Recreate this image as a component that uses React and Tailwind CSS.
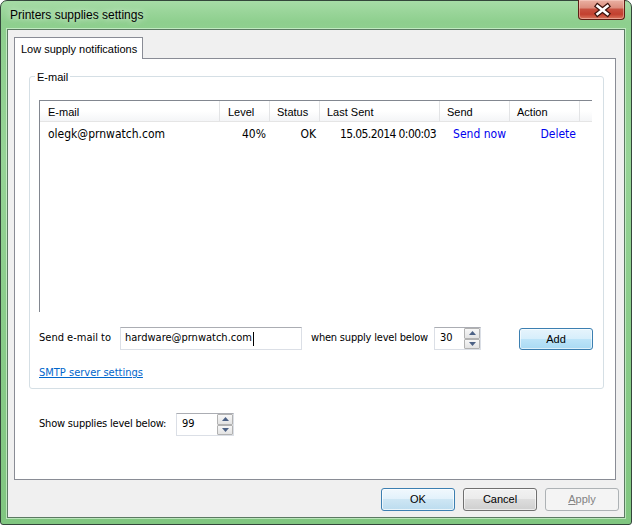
import React from 'react';

const tahoma = "font-['DejaVu_Sans_Condensed','Liberation_Sans',sans-serif]";

const columns = [
    { title: 'E-mail', width: 'w-[180px]', pad: 'pl-[8px]' },
    { title: 'Level', width: 'w-[50px]', pad: 'pl-[8px]' },
    { title: 'Status', width: 'w-[50px]', pad: 'pl-[7px]' },
    { title: 'Last Sent', width: 'w-[120px]', pad: 'pl-[7px]' },
    { title: 'Send', width: 'w-[70px]', pad: 'pl-[7px]' },
    { title: 'Action', width: 'w-[70px]', pad: 'pl-[7px]' },
];

const rows = [
    { email: 'olegk@prnwatch.com', level: '40%', status: 'OK', lastSent: '15.05.2014 0:00:03' },
];

function CloseButton() {
    return (
        <div className="-mt-px h-[20px] w-[47px] overflow-hidden rounded-b-[4px] border border-t-0 border-[#5e1d14] bg-[linear-gradient(180deg,#eab1a3_0%,#dc8e7e_40%,#c7503f_50%,#c2402f_75%,#d9775f_100%)] shadow-[inset_0_0_0_1px_rgba(255,220,210,0.45)]">
            <svg width="47" height="20" viewBox="0 0 47 20">
                <g strokeLinecap="square">
                    <path d="M18.5 6 L28.5 14 M28.5 6 L18.5 14" stroke="#3d130d" strokeWidth="5" />
                    <path d="M18.5 6 L28.5 14 M28.5 6 L18.5 14" stroke="#ffffff" strokeWidth="2.6" />
                </g>
            </svg>
        </div>
    );
}

function SpinButton({ up }) {
    return (
        <div className="flex flex-1 items-center justify-center rounded-[1px] border border-[#b2b2b2] bg-[linear-gradient(180deg,#f7f7f7,#e3e3e3)]">
            <svg width="7" height="4" viewBox="0 0 7 4">
                {up ? (
                    <path d="M0 4 L3.5 0 L7 4 Z" fill="#4c6185" />
                ) : (
                    <path d="M0 0 L7 0 L3.5 4 Z" fill="#4c6185" />
                )}
            </svg>
        </div>
    );
}

function SpinBox({ value, className }) {
    return (
        <div className={`flex h-[23px] border border-[#dbdfe6] border-t-[#abadb3] bg-white ${className}`}>
            <div className={`flex flex-1 items-center pl-[5px] text-[11px] text-black ${tahoma}`}>{value}</div>
            <div className="flex w-[16px] flex-col">
                <SpinButton up />
                <SpinButton />
            </div>
        </div>
    );
}

function DialogButton({ children, variant }) {
    const styles = {
        default: 'border-[#3c7fb1] bg-[linear-gradient(180deg,#f1f8fd_0%,#e1f1fb_50%,#cde6f4_50%,#bcdcef_100%)] text-black shadow-[inset_0_0_0_1px_rgba(255,255,255,0.7)]',
        normal: 'border-[#707070] bg-[linear-gradient(180deg,#f2f2f2_0%,#ebebeb_50%,#dddddd_50%,#cfcfcf_100%)] text-black shadow-[inset_0_0_0_1px_rgba(255,255,255,0.6)]',
        disabled: 'border-[#adb2b5] bg-[#f4f4f4] text-[#838383]',
    };
    return (
        <button className={`flex h-[23px] w-[74px] items-center justify-center rounded-[3px] border text-[11px] ${styles[variant]}`}>
            {children}
        </button>
    );
}

export default function App() {
    return (
        <div className="flex h-[525px] w-[632px] flex-col rounded-t-[7px] rounded-b-[3px] border border-[#33463a] bg-[linear-gradient(180deg,#a6dca6_0%,#8ecf8e_4%,#96d496_30%,#8acd8a_60%,#80c680_100%)] font-['Liberation_Sans',Arial,sans-serif]">
            {/* Title bar */}
            <div className="flex h-[28px] items-start pl-[9px] pr-[6px]">
                <div className="flex h-full flex-1 items-center text-[12px] text-black [text-shadow:0_0_7px_rgba(255,255,255,0.95)]">
                    Printers supplies settings
                </div>
                <CloseButton />
            </div>

            {/* Client area */}
            <div className="mx-[6px] flex h-[489px] flex-col border border-[#5b7a62] bg-[#f0f0f0] shadow-[0_0_0_1px_rgba(235,255,235,0.55)]">
                {/* Tab strip */}
                <div className="flex pl-[6px] pt-[7px]">
                    <div className="relative z-10 -mb-px flex h-[22px] w-[129px] items-center border border-b-0 border-[#898c95] bg-white pl-[6px] pt-px text-[11px] text-black">
                        Low supply notifications
                    </div>
                </div>

                {/* Tab page */}
                <div className="ml-[6px] mr-[8px] flex h-[422px] flex-col border border-[#898c95] bg-white">
                    <fieldset className="ml-[14px] mr-[11px] mt-[10px] h-[320px] rounded-[3px] border border-[#d5dfe5] p-0">
                        <legend className="ml-[5px] h-[14px] px-[2px] pt-px text-[11px] leading-[14px] text-black">E-mail</legend>

                        {/* List view */}
                        <div className="ml-[9px] mt-[17px] h-[212px] w-[553px] border-l border-t border-[#828790] bg-white">
                            <div className="flex h-[21px] border-b border-[#e5e5e5] bg-[linear-gradient(180deg,#ffffff_0%,#ffffff_50%,#f4f5f7_100%)]">
                                {columns.map((col) => (
                                    <div
                                        key={col.title}
                                        className={`flex items-center border-r border-[#e3e4e6] pt-[2px] text-[11px] text-black ${col.width} ${col.pad}`}
                                    >
                                        {col.title}
                                    </div>
                                ))}
                                <div className="flex-1" />
                            </div>
                            {rows.map((row) => (
                                <div key={row.email} className={`flex h-[22px] items-center pt-px text-[12px] ${tahoma}`}>
                                    <div className="w-[180px] pl-[8px] text-black">{row.email}</div>
                                    <div className="w-[50px] pr-[4px] text-right text-black">{row.level}</div>
                                    <div className="w-[50px] pr-[4px] text-right text-black">{row.status}</div>
                                    <div className="w-[120px] pr-[4px] text-right tracking-[-0.6px] text-black">{row.lastSent}</div>
                                    <div className="w-[70px] pr-[4px] text-right text-[#0000ee]">Send now</div>
                                    <div className="w-[70px] pr-[4px] text-right text-[#0000ee]">Delete</div>
                                </div>
                            ))}
                        </div>

                        {/* Add e-mail row */}
                        <div className={`ml-[9px] mt-[15px] flex h-[23px] items-start text-[11px] text-black ${tahoma}`}>
                            <div className="flex h-full w-[81px] items-center">Send e-mail to</div>
                            <div className="flex h-full w-[182px] items-center border border-[#dbdfe6] border-t-[#abadb3] bg-white pl-[4px]">
                                hardware@prnwatch.com
                                <span className="ml-px h-[14px] w-px bg-black" />
                            </div>
                            <div className="ml-[9px] flex h-full w-[123px] items-center tracking-[-0.2px]">when supply level below</div>
                            <SpinBox value="30" className="w-[47px]" />
                            <button className="ml-[38px] mt-px flex h-[22px] w-[74px] items-center justify-center rounded-[3px] border border-[#3c7fb1] bg-[linear-gradient(180deg,#e6f4fc_0%,#d6eefb_50%,#bde4f8_50%,#a9daf3_100%)] font-['Liberation_Sans',Arial,sans-serif] text-[11px] shadow-[inset_0_0_0_1px_rgba(255,255,255,0.6)]">
                                Add
                            </button>
                        </div>

                        <div className={`ml-[9px] mt-[16px] text-[11px] leading-[13px] ${tahoma}`}>
                            <a className="text-[#0066cc] underline">SMTP server settings</a>
                        </div>
                    </fieldset>

                    {/* Show supplies level */}
                    <div className={`ml-[24px] mt-[24px] flex h-[23px] items-center text-[11px] text-black ${tahoma}`}>
                        <div className="w-[137px] tracking-[-0.2px]">Show supplies level below:</div>
                        <SpinBox value="99" className="w-[58px]" />
                    </div>
                </div>

                {/* Dialog buttons */}
                <div className="mt-[8px] flex justify-end gap-[8px] pr-[5px]">
                    <DialogButton variant="default">OK</DialogButton>
                    <DialogButton variant="normal">Cancel</DialogButton>
                    <DialogButton variant="disabled">
                        <span className="underline">A</span>pply
                    </DialogButton>
                </div>
            </div>
        </div>
    );
}
